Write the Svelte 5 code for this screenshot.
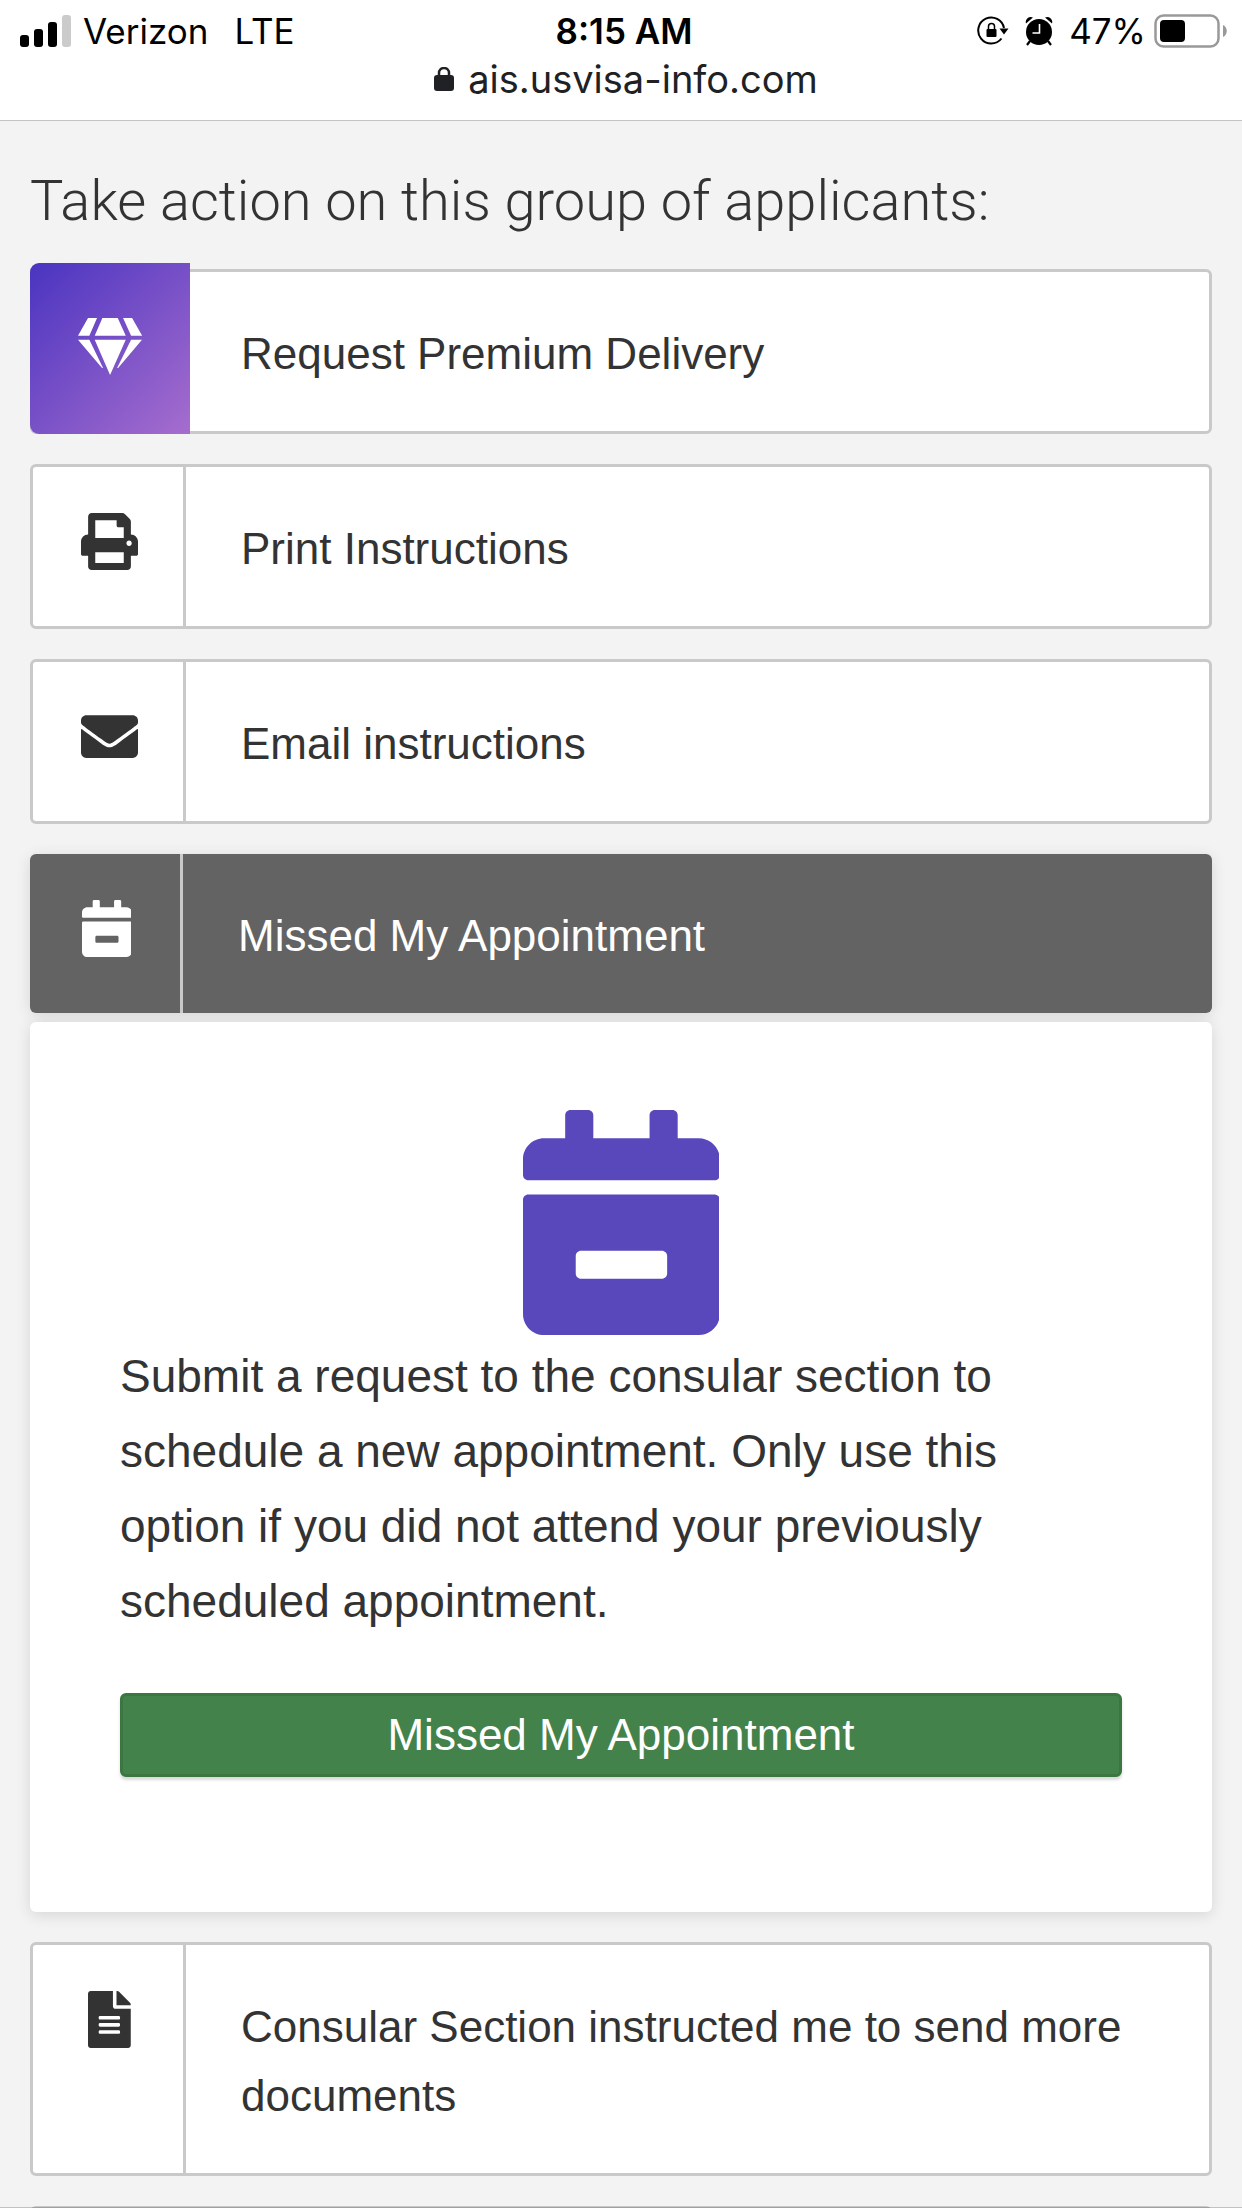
<script>
  // icon outlines, all drawn on a 512 unit tall grid
  const icons = {
    print: {
      width: 512,
      path: 'M448 192V77.25c0-8.49-3.37-16.62-9.37-22.63L393.37 9.37c-6-6-14.14-9.37-22.63-9.37H96C78.33 0 64 14.33 64 32v160c-35.35 0-64 28.65-64 64v112c0 8.84 7.16 16 16 16h48v96c0 17.67 14.33 32 32 32h320c17.67 0 32-14.33 32-32v-96h48c8.84 0 16-7.16 16-16V256c0-35.35-28.65-64-64-64zm-64 256H128v-96h256v96zm0-224H128V64h192v48c0 8.84 7.16 16 16 16h48v96zm48 72c-13.25 0-24-10.75-24-24 0-13.26 10.75-24 24-24s24 10.74 24 24c0 13.25-10.75 24-24 24z',
    },
    envelope: {
      width: 512,
      path: 'M502.3 190.8c3.9-3.1 9.7-.2 9.7 4.7V400c0 26.5-21.5 48-48 48H48c-26.5 0-48-21.5-48-48V195.6c0-5 5.7-7.8 9.7-4.7 22.4 17.4 52.1 39.5 154.1 113.6 21.1 15.4 56.7 47.8 92.2 47.6 35.7.3 72-32.8 92.3-47.6 102-74.1 131.6-96.3 154-113.7zM256 320c23.2.4 56.6-29.2 73.4-41.4 132.7-96.3 142.8-104.7 173.4-128.7 5.8-4.5 9.2-11.5 9.2-18.9v-19c0-26.5-21.5-48-48-48H48c-26.5 0-48 21.5-48 48v19c0 7.4 3.4 14.3 9.2 18.9 30.6 23.9 40.7 32.4 173.4 128.7 16.8 12.2 50.2 41.8 73.4 41.4z',
    },
    calendar: {
      width: 448,
      path: 'M436 160H12c-6.6 0-12-5.4-12-12v-36c0-26.5 21.5-48 48-48h48V12c0-6.6 5.4-12 12-12h40c6.6 0 12 5.4 12 12v52h128V12c0-6.6 5.4-12 12-12h40c6.6 0 12 5.4 12 12v52h48c26.5 0 48 21.5 48 48v36c0 6.6-5.4 12-12 12zM12 192h424c6.6 0 12 5.4 12 12v260c0 26.5-21.5 48-48 48H48c-26.5 0-48-21.5-48-48V204c0-6.6 5.4-12 12-12zm304 192c6.6 0 12-5.4 12-12v-40c0-6.6-5.4-12-12-12H132c-6.6 0-12 5.4-12 12v40c0 6.6 5.4 12 12 12h184z',
    },
    file: {
      width: 384,
      path: 'M224 136V0H24C10.7 0 0 10.7 0 24v464c0 13.3 10.7 24 24 24h336c13.3 0 24-10.7 24-24V160H248c-13.2 0-24-10.8-24-24zm64 236c0 6.6-5.4 12-12 12H108c-6.6 0-12-5.4-12-12v-8c0-6.6 5.4-12 12-12h168c6.6 0 12 5.4 12 12v8zm0-64c0 6.6-5.4 12-12 12H108c-6.6 0-12-5.4-12-12v-8c0-6.6 5.4-12 12-12h168c6.6 0 12 5.4 12 12v8zm0-72v8c0 6.6-5.4 12-12 12H108c-6.6 0-12-5.4-12-12v-8c0-6.6 5.4-12 12-12h168c6.6 0 12 5.4 12 12zm96-114.1v6.1H256V0h6.1c6.4 0 12.5 2.5 17 7l97.9 98c4.5 4.5 7 10.6 7 16.9z',
    },
    gem: {
      width: 576,
      path: 'M90 0h81l-69 159H0zM219 0h138l72 159H150zM405 0h81l90 159h-99zM0 195h102l123 255h-9zM150 195h279L288 512zM477 195h99L360 450h-9z',
    },
  };

  const actions = [
    { id: 'premium', label: 'Request Premium Delivery', icon: icons.gem, premium: true },
    { id: 'print', label: 'Print Instructions', icon: icons.print },
    { id: 'email', label: 'Email instructions', icon: icons.envelope },
    {
      id: 'missed',
      label: 'Missed My Appointment',
      icon: icons.calendar,
      text: 'Submit a request to the consular section to schedule a new appointment. Only use this option if you did not attend your previously scheduled appointment.',
    },
    { id: 'documents', label: 'Consular Section instructed me to send more documents', icon: icons.file },
  ];

  let open = $state('missed');

  function toggle(id) {
    open = open === id ? null : id;
  }
</script>

<div class="page">
  <header>
    <div class="status">
      <div class="carrier">
        <svg width="51" height="32" viewBox="0 0 51 32" aria-hidden="true">
          <rect x="0" y="20" width="9" height="12" rx="3" />
          <rect x="14" y="14" width="9" height="18" rx="3" />
          <rect x="28" y="7" width="9" height="25" rx="3" />
          <rect x="42" y="0" width="9" height="32" rx="3" fill="#cbcbcb" />
        </svg>
        <span>Verizon</span>
        <span class="network">LTE</span>
      </div>
      <div class="time">8:15 AM</div>
      <div class="indicators">
        <!-- rotation lock -->
        <svg width="32" height="30" viewBox="0 0 32 30" aria-hidden="true">
          <path d="M27 12A13 13 0 1 0 24.500 22.500" fill="none" stroke="#000" stroke-width="2" />
          <path d="M22.500 12.500h9l-4.500 6z" />
          <rect x="9.500" y="13" width="10" height="8" rx="1" />
          <path d="M11.500 13v-2.500a3 3 0 0 1 6 0V13" fill="none" stroke="#000" stroke-width="1.500" />
        </svg>
        <!-- alarm -->
        <svg class="alarm" width="28" height="30" viewBox="0 0 28 30" aria-hidden="true">
          <circle cx="14" cy="16" r="13" />
          <path d="M1 7.500a5 5 0 0 1 7-6zM27 7.500a5 5 0 0 0-7-6z" />
          <path d="M5 25l-3 4M23 25l3 4" stroke="#000" stroke-width="2.200" />
          <path d="M14.500 8v9H7.500" fill="none" stroke="#fff" stroke-width="1.600" />
        </svg>
        <span>47%</span>
        <!-- battery -->
        <svg width="74" height="34" viewBox="0 0 74 34" aria-hidden="true">
          <rect x="1.500" y="1.500" width="63" height="31" rx="8" fill="none" stroke="#999" stroke-width="2.500" />
          <rect x="6" y="6" width="25" height="22" rx="4" />
          <path d="M69 11c5 2 5 10 0 12z" fill="#999" />
        </svg>
      </div>
    </div>
    <div class="address">
      <svg width="20" height="24" viewBox="0 0 20 24" aria-hidden="true">
        <rect x="0" y="8" width="20" height="16" rx="3" fill="#202124" />
        <path d="M5 9V6a5 5 0 0 1 10 0v3" fill="none" stroke="#202124" stroke-width="2.500" />
      </svg>
      <span>ais.usvisa-info.com</span>
    </div>
  </header>

  <main>
    <h1>Take action on this group of applicants:</h1>

    {#each actions as action}
      <section class="item">
        <button
          class="title"
          class:active={open === action.id && action.text}
          class:premium={action.premium}
          aria-expanded={open === action.id}
          onclick={() => toggle(action.id)}
        >
          <span class="icon">
            <svg height="57" viewBox="0 0 {action.icon.width} 512" fill="currentColor" aria-hidden="true">
              <path d={action.icon.path} />
            </svg>
          </span>
          <span class="label">{action.label}</span>
        </button>

        {#if open === action.id && action.text}
          <div class="content">
            <svg height="225" viewBox="0 0 {action.icon.width} 512" fill="currentColor" aria-hidden="true">
              <path d={action.icon.path} />
            </svg>
            <p>{action.text}</p>
            <a class="button" href="#{action.id}">{action.label}</a>
          </div>
        {/if}
      </section>
    {/each}

    <div class="next"></div>
  </main>

  <footer></footer>
</div>

<style>
  :global(body) {
    margin: 0;
    background: #f3f3f3;
  }

  .page {
    display: flex;
    flex-direction: column;
    height: 100vh;
    overflow: hidden;
    color: #333;
    font-family: "Liberation Sans", Arial, sans-serif;
    font-size: 44px;
  }

  /* phone status bar and address */
  header {
    flex: none;
    padding: 10px 14px 14px 20px;
    border-bottom: 1px solid #c4c4c4;
    background: #fff;
    color: #000;
    font-family: Inter, sans-serif;
    font-size: 35px;
    line-height: 42px;
  }

  .status {
    display: grid;
    grid-template-columns: 1fr auto 1fr;
    align-items: center;
  }

  .carrier,
  .indicators,
  .address {
    display: flex;
    align-items: center;
  }

  .carrier {
    gap: 12px;
  }

  .network {
    margin-left: 14px;
  }

  .time {
    font-weight: 600;
  }

  .indicators {
    justify-content: flex-end;
    gap: 8px;
  }

  .alarm {
    margin: 0 8px;
  }

  .address {
    justify-content: center;
    gap: 14px;
    padding-left: 4px;
    color: #202124;
    font-size: 38px;
    line-height: 54px;
  }

  main {
    flex: 1;
    min-height: 0;
    overflow: hidden;
    padding: 40px 30px 0;
  }

  h1 {
    margin: 0 0 28px;
    font-family: "Helvetica Neue", Roboto, sans-serif;
    font-size: 56px;
    font-weight: 300;
    line-height: 80px;
  }

  .item {
    margin-bottom: 30px;
  }

  .title {
    display: flex;
    box-sizing: border-box;
    width: 100%;
    margin: 0;
    padding: 0;
    border: 3px solid #c9c9c9;
    border-radius: 6px;
    background: #fff;
    color: #333;
    font: inherit;
    line-height: 69px;
    text-align: left;
    cursor: pointer;
  }

  .icon {
    display: flex;
    flex: none;
    justify-content: center;
    box-sizing: border-box;
    width: 153px;
    padding: 46px 0 0 3px;
    border-right: 3px solid #c9c9c9;
  }

  .label {
    padding: 47px 54px 43px 55px;
  }

  .active {
    border: none;
    background: #636363;
    color: #fff;
    box-shadow: 0 3px 15px rgba(0, 0, 0, 0.12);
  }

  /* gradient tile stands a little taller than its row */
  .premium .icon {
    width: 160px;
    margin: -9px -4px -3px -3px;
    padding: 55px 0 0;
    border: none;
    border-radius: 9px 0 0 9px;
    background: linear-gradient(135deg, #4a34c0, #a66dce);
    color: #fff;
  }

  .content {
    display: flex;
    flex-direction: column;
    margin-top: 9px;
    padding: 88px 90px 135px;
    border-radius: 6px;
    background: #fff;
    box-shadow: 0 3px 15px rgba(0, 0, 0, 0.12);
  }

  .content svg {
    align-self: center;
    color: #5948bc;
  }

  .content p {
    margin: 4px 0 54px;
    font-size: 46px;
    line-height: 75px;
  }

  .button {
    padding: 3px 0;
    border: 3px solid #3c7643;
    border-radius: 6px;
    background: #43824a;
    box-shadow: 0 3px 3px rgba(0, 0, 0, 0.15);
    color: #fff;
    line-height: 72px;
    text-align: center;
    text-decoration: none;
  }

  .next {
    height: 165px;
    border: 3px solid #c9c9c9;
    border-radius: 6px;
    background: #fff;
  }

  footer {
    position: fixed;
    right: 0;
    bottom: 0;
    left: 0;
    height: 1px;
    background: rgba(0, 0, 0, 0.2);
  }
</style>
